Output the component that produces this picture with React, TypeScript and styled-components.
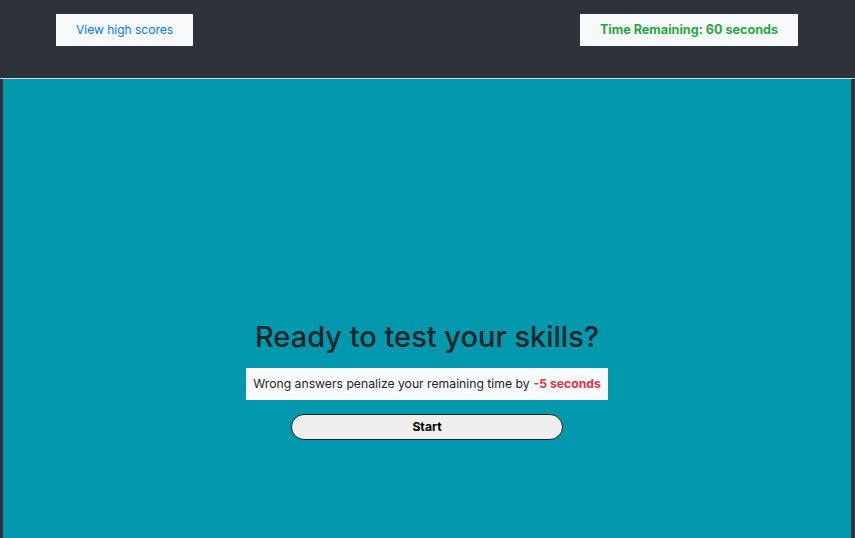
import React from "react";
import styled, { createGlobalStyle } from "styled-components";

const GlobalStyle = createGlobalStyle`
  html, body {
    margin: 0;
    padding: 0;
    background: #2e323a;
    font-family: Inter, "Liberation Sans", sans-serif;
    overflow: hidden;
  }
`;

const Page = styled.div`
  height: 100vh;
  display: flex;
  flex-direction: column;
`;

const Header = styled.header`
  display: flex;
  justify-content: space-between;
  align-items: flex-start;
  padding: 14px 57px 32px 56px;
  border-bottom: 1px solid #d6d8db;
`;

const HeaderBox = styled.div<{ $bold?: boolean; $color: string }>`
  background: #f8f9fa;
  height: 32px;
  padding: 0 20px 1px;
  display: flex;
  align-items: center;
  box-sizing: border-box;
  font-size: ${(p) => (p.$bold ? "12.6px" : "12px")};
  font-weight: ${(p) => (p.$bold ? 700 : 400)};
  color: ${(p) => p.$color};
  cursor: pointer;
`;

const Main = styled.main`
  flex: 1;
  margin: 0 4px 0 3px;
  background: #0098ad;
  display: flex;
  flex-direction: column;
  align-items: center;
  padding-top: 241px;
`;

const Title = styled.h2`
  margin: 0 0 13px;
  font-size: 29px;
  font-weight: 500;
  color: #212529;
  line-height: 1.2;
`;

const Note = styled.p`
  margin: 0 0 14px;
  background: #f8f9fa;
  padding: 0 7px;
  height: 32px;
  display: flex;
  align-items: center;
  font-size: 12.2px;
  color: #212529;
`;

const Penalty = styled.strong`
  color: #dc3545;
  font-weight: 700;
  margin-left: 4px;
`;

const StartButton = styled.button`
  width: 272px;
  height: 26px;
  border: 1px solid #222;
  border-radius: 13px;
  background: #efefef;
  font-family: Inter, "Liberation Sans", sans-serif;
  font-size: 12.2px;
  font-weight: 700;
  color: #000;
  cursor: pointer;
`;

export default function App() {
  return (
    <Page>
      <GlobalStyle />
      <Header>
        <HeaderBox $color="#007bff">View high scores</HeaderBox>
        <HeaderBox $bold $color="#28a745">Time Remaining: 60 seconds</HeaderBox>
      </Header>
      <Main>
        <Title>Ready to test your skills?</Title>
        <Note>
          Wrong answers penalize your remaining time by<Penalty>-5 seconds</Penalty>
        </Note>
        <StartButton>Start</StartButton>
      </Main>
    </Page>
  );
}
